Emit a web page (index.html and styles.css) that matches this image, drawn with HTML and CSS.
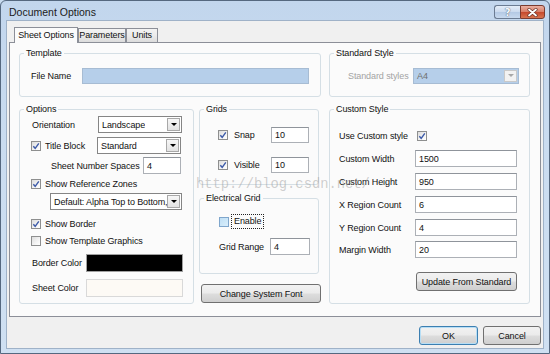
FILE: index.html
```html
<!DOCTYPE html>
<html lang="en">
<head>
    <meta charset="UTF-8">
    <title>Document Options</title>
    <link rel="stylesheet" href="styles.css">
</head>
<body>
    <div class="window">
        <div class="titlebar">
            <span class="title">Document Options</span>
            <div class="caption-btns">
                <span class="cap-btn help">?</span>
                <span class="cap-btn close">
                    <svg width="11" height="9" viewBox="0 0 11 9">
                        <path d="M2 1.5 L9 7.5 M9 1.5 L2 7.5" stroke="#6b3328" stroke-width="3.2" stroke-linecap="round"/>
                        <path d="M2 1.5 L9 7.5 M9 1.5 L2 7.5" stroke="#ffffff" stroke-width="1.8" stroke-linecap="round"/>
                    </svg>
                </span>
            </div>
        </div>

        <div class="client">
            <div class="tabs">
                <span class="tab active">Sheet Options</span>
                <span class="tab tab-params">Parameters</span>
                <span class="tab tab-units">Units</span>
            </div>

            <div class="panel">
                <div class="row top-row">
                    <fieldset class="group template">
                        <legend>Template</legend>
                        <div class="body">
                            <div class="line">
                                <span class="lbl w51">File Name</span>
                                <span class="field blue w227"></span>
                            </div>
                        </div>
                    </fieldset>
                    <fieldset class="group standard">
                        <legend>Standard Style</legend>
                        <div class="body">
                            <div class="line">
                                <span class="lbl w65 disabled">Standard styles</span>
                                <span class="combo blue disabled w106">
                                    <span class="combo-text">A4</span>
                                    <span class="arrow"><i></i></span>
                                </span>
                            </div>
                        </div>
                    </fieldset>
                </div>

                <div class="row main-row">
                    <fieldset class="group options">
                        <legend>Options</legend>
                        <div class="body">
                            <div class="line r-orient">
                                <span class="lbl w66">Orientation</span>
                                <span class="combo w84">
                                    <span class="combo-text">Landscape</span>
                                    <span class="arrow"><i></i></span>
                                </span>
                            </div>
                            <div class="line r-title">
                                <span class="lbl w66 with-cb">
                                    <span class="cb"><svg width="8" height="8" viewBox="0 0 8 8"><path d="M1.3 4.2 L3.2 6.3 L6.8 1.4" stroke="#3c5aa8" stroke-width="1.4" fill="none"/></svg></span>
                                    Title Block
                                </span>
                                <span class="combo w84">
                                    <span class="combo-text">Standard</span>
                                    <span class="arrow"><i></i></span>
                                </span>
                            </div>
                            <div class="line r-spaces">
                                <span class="lbl w92 indent">Sheet Number Spaces</span>
                                <span class="field w38"><span class="val">4</span></span>
                            </div>
                            <div class="line check-line r-zones">
                                <span class="cb"><svg width="8" height="8" viewBox="0 0 8 8"><path d="M1.3 4.2 L3.2 6.3 L6.8 1.4" stroke="#3c5aa8" stroke-width="1.4" fill="none"/></svg></span>
                                <span class="cb-text">Show Reference Zones</span>
                            </div>
                            <div class="line r-zonecombo">
                                <span class="combo w132 indent">
                                    <span class="combo-text">Default: Alpha Top to Bottom,</span>
                                    <span class="arrow"><i></i></span>
                                </span>
                            </div>
                            <div class="line check-line r-border">
                                <span class="cb"><svg width="8" height="8" viewBox="0 0 8 8"><path d="M1.3 4.2 L3.2 6.3 L6.8 1.4" stroke="#3c5aa8" stroke-width="1.4" fill="none"/></svg></span>
                                <span class="cb-text">Show Border</span>
                            </div>
                            <div class="line check-line r-graphics">
                                <span class="cb"></span>
                                <span class="cb-text">Show Template Graphics</span>
                            </div>
                            <div class="line r-color">
                                <span class="lbl w54">Border Color</span>
                                <span class="swatch black"></span>
                            </div>
                            <div class="line r-color">
                                <span class="lbl w54">Sheet Color</span>
                                <span class="swatch cream"></span>
                            </div>
                        </div>
                    </fieldset>

                    <div class="grid-col">
                        <fieldset class="group grids">
                            <legend>Grids</legend>
                            <div class="body">
                                <div class="line r-snap">
                                    <span class="lbl w53 with-cb">
                                        <span class="cb"><svg width="8" height="8" viewBox="0 0 8 8"><path d="M1.3 4.2 L3.2 6.3 L6.8 1.4" stroke="#3c5aa8" stroke-width="1.4" fill="none"/></svg></span>
                                        <span class="gap6">Snap</span>
                                    </span>
                                    <span class="field w38"><span class="val">10</span></span>
                                </div>
                                <div class="line r-visible">
                                    <span class="lbl w53 with-cb">
                                        <span class="cb"><svg width="8" height="8" viewBox="0 0 8 8"><path d="M1.3 4.2 L3.2 6.3 L6.8 1.4" stroke="#3c5aa8" stroke-width="1.4" fill="none"/></svg></span>
                                        <span class="gap6">Visible</span>
                                    </span>
                                    <span class="field w38"><span class="val">10</span></span>
                                </div>
                            </div>
                        </fieldset>
                        <fieldset class="group electrical">
                            <legend>Electrical Grid</legend>
                            <div class="body">
                                <div class="line r-enable">
                                    <span class="cb hover"></span>
                                    <span class="focus-text">Enable</span>
                                </div>
                                <div class="line r-range">
                                    <span class="lbl w51">Grid Range</span>
                                    <span class="field w40"><span class="val">4</span></span>
                                </div>
                            </div>
                        </fieldset>
                        <button class="btn font-btn">Change System Font</button>
                    </div>

                    <fieldset class="group custom">
                        <legend>Custom Style</legend>
                        <div class="body">
                            <div class="line r-use">
                                <span class="lbl w78">Use Custom style</span>
                                <span class="cb"><svg width="8" height="8" viewBox="0 0 8 8"><path d="M1.3 4.2 L3.2 6.3 L6.8 1.4" stroke="#3c5aa8" stroke-width="1.4" fill="none"/></svg></span>
                            </div>
                            <div class="line r-first">
                                <span class="lbl w76">Custom Width</span>
                                <span class="field w102"><span class="val">1500</span></span>
                            </div>
                            <div class="line r-next">
                                <span class="lbl w76">Custom Height</span>
                                <span class="field w102"><span class="val">950</span></span>
                            </div>
                            <div class="line r-next">
                                <span class="lbl w76">X Region Count</span>
                                <span class="field w102"><span class="val">6</span></span>
                            </div>
                            <div class="line r-next">
                                <span class="lbl w76">Y Region Count</span>
                                <span class="field w102"><span class="val">4</span></span>
                            </div>
                            <div class="line r-margin">
                                <span class="lbl w76">Margin Width</span>
                                <span class="field w102"><span class="val">20</span></span>
                            </div>
                            <button class="btn update-btn">Update From Standard</button>
                        </div>
                    </fieldset>
                </div>
            </div>

            <div class="footer">
                <button class="btn default">OK</button>
                <button class="btn">Cancel</button>
            </div>
        </div>

        <div class="watermark">http://blog.csdn.net/</div>
    </div>
</body>
</html>
```

FILE: styles.css
```css
* {
    margin: 0;
    padding: 0;
    box-sizing: border-box;
}

body {
    width: 550px;
    height: 354px;
    overflow: hidden;
    font-family: 'Liberation Sans', Arial, sans-serif;
    font-size: 9px;
    letter-spacing: -0.1px;
    color: #111;
    background: #c8dbef;
}

.window {
    position: relative;
    width: 550px;
    height: 354px;
    display: flex;
    flex-direction: column;
    padding: 0 5px 4px;
    border: 1px solid #55687f;
    border-radius: 6px 6px 0 0;
    background: linear-gradient(180deg, #c2d6ed 0%, #cadcf0 40%, #cfe0f2 100%);
}

/* Title bar */
.titlebar {
    height: 19px;
    display: flex;
    justify-content: space-between;
    padding-left: 3px;
}

.title {
    font-size: 10.5px;
    letter-spacing: 0;
    line-height: 22px;
    color: #1b1b1b;
}

.caption-btns {
    display: flex;
    margin-top: 4px;
    margin-right: -1px;
    height: 14px;
}

.cap-btn {
    display: flex;
    align-items: center;
    justify-content: center;
    height: 14px;
    border: 1px solid #6b7b92;
}

.cap-btn.help {
    width: 26px;
    border-radius: 3px 0 0 3px;
    border-right: none;
    background: linear-gradient(180deg, #e4edf8 0%, #cbdaee 48%, #b4c9e4 52%, #c8d9ee 100%);
    font-family: 'DejaVu Sans', sans-serif;
    font-size: 10px;
    font-weight: bold;
    color: #f6f9fd;
    text-shadow: 0 0 1px #59687c, 0 0 1px #59687c;
}

.cap-btn.close {
    width: 25px;
    border-color: #7a3b2f;
    border-radius: 0 3px 3px 0;
    background: linear-gradient(180deg, #eab0a2 0%, #d97f68 48%, #c5492d 52%, #d8744f 100%);
}

/* Client area */
.client {
    flex: 1;
    display: flex;
    flex-direction: column;
    padding: 0 2px;
    background: #f0f0f0;
    border: 1px solid #9fb2c8;
}

.tabs {
    display: flex;
    align-items: flex-end;
    height: 15px;
    margin-top: 6px;
    padding-left: 5px;
}

.tab {
    height: 14px;
    border: 1px solid #8c8f98;
    border-bottom: none;
    background: linear-gradient(180deg, #f3f3f3 0%, #ebebeb 50%, #dcdcdc 100%);
    text-align: center;
    line-height: 13px;
    white-space: nowrap;
}

.tab.active {
    position: relative;
    z-index: 1;
    width: 64px;
    height: 16px;
    margin-bottom: -1px;
    background: #fbfbfb;
    line-height: 15px;
}

.tab-params {
    width: 48px;
}

.tab-units {
    width: 32px;
}

.panel {
    height: 275px;
    padding: 4px 0 0 9px;
    border: 1px solid #8c8f98;
    background: #fbfbfb;
}

.row {
    display: flex;
}

.top-row {
    gap: 8px;
}

.main-row {
    margin-top: 6px;
    height: 201px;
    gap: 5px;
}

/* Group boxes */
.group {
    border: 1px solid #d5dfe5;
    border-radius: 3px;
    min-width: 0;
}

.group legend {
    margin-left: 4px;
    padding: 0 2px;
    line-height: 12px;
}

.template {
    width: 302px;
}

.template .body {
    padding: 8px 0 12px 11px;
}

.standard {
    width: 201px;
}

.standard .body {
    padding: 8px 0 12px 18px;
}

.options {
    width: 175px;
}

.options .body {
    padding-left: 12px;
}

.grid-col {
    width: 120px;
    display: flex;
    flex-direction: column;
    margin-right: 5px;
}

.grids {
    height: 82px;
}

.grids .body {
    padding-left: 18px;
}

.electrical {
    height: 82px;
    margin-top: 7px;
}

.electrical .body {
    padding-left: 19px;
}

.custom {
    width: 201px;
}

.custom .body {
    padding-left: 9px;
}

/* Rows */
.line {
    display: flex;
    align-items: center;
    height: 17px;
}

.check-line {
    height: 12px;
}

.r-orient { margin-top: 1px; }
.r-title { margin-top: 4px; }
.r-spaces { margin-top: 3px; }
.r-zones { margin-top: 4px; margin-left: -1px; }
.r-zonecombo { margin-top: 3px; }
.r-border { margin-top: 8px; margin-left: -1px; }
.r-graphics { margin-top: 5px; margin-left: -1px; }
.r-color { margin-top: 7px; height: 18px; }

.r-snap { margin-top: 12px; height: 16px; }
.r-visible { margin-top: 14px; height: 16px; }
.r-enable { margin-top: 10px; height: 15px; }
.r-range { margin-top: 9px; }

.r-use { margin-top: 15px; height: 12px; }
.r-first { margin-top: 8px; }
.r-next { margin-top: 6px; }
.r-margin { margin-top: 5px; }

.lbl {
    flex: none;
    white-space: nowrap;
}

.lbl.disabled {
    color: #a3a3a3;
}

.with-cb {
    display: flex;
    align-items: center;
    gap: 4px;
}

.r-title .with-cb {
    margin-left: -1px;
}

.gap6 {
    margin-left: 2px;
}

.indent {
    margin-left: 18px;
}

.r-spaces .indent {
    margin-left: 19px;
}

.w51 { width: 51px; }
.w53 { width: 53px; }
.w54 { width: 54px; }
.w65 { width: 65px; }
.w66 { width: 66px; }
.w76 { width: 76px; }
.w78 { width: 78px; }
.w92 { width: 92px; }

.w38 { width: 38px; }
.w40 { width: 40px; }
.w84 { width: 84px; }
.w102 { width: 102px; }
.w106 { width: 106px; }
.w132 { width: 132px; }
.w227 { width: 227px; }

/* Inputs */
.field {
    display: flex;
    align-items: center;
    height: 100%;
    padding-left: 3px;
    border: 1px solid #acb0b6;
    border-top-color: #8f949b;
    background: #fff;
}

.template .field,
.standard .combo {
    height: 16px;
}

.field.blue,
.combo.blue {
    background: #b6cfea;
    border-color: #a7bcd3;
}

.combo {
    display: flex;
    align-items: center;
    justify-content: space-between;
    height: 100%;
    border: 1px solid #858585;
    background: #fff;
}

.combo-text {
    padding-left: 3px;
    white-space: nowrap;
    overflow: hidden;
}

.combo.disabled .combo-text {
    color: #6f6f6f;
}

.arrow {
    flex: none;
    display: flex;
    align-items: center;
    justify-content: center;
    width: 13px;
    height: 13px;
    margin-right: 1px;
    border: 1px solid #a8a8a8;
    background: linear-gradient(180deg, #f7f7f7, #e2e2e2);
}

.arrow i {
    width: 0;
    height: 0;
    border-left: 3px solid transparent;
    border-right: 3px solid transparent;
    border-top: 3px solid #000;
}

.combo.disabled .arrow {
    height: 12px;
    border-color: #c9c9c9;
    background: #f2f2f2;
}

.combo.disabled .arrow i {
    border-top-color: #a8a8a8;
}

/* Checkboxes */
.cb {
    flex: none;
    display: flex;
    align-items: center;
    justify-content: center;
    width: 10px;
    height: 10px;
    border: 1px solid #8e8f8f;
    background: linear-gradient(135deg, #dcdcdc 0%, #f4f4f4 60%, #ffffff 100%);
}

.cb.hover {
    border-color: #7fa6cc;
    background: linear-gradient(135deg, #bfdff5 0%, #d9eefb 100%);
}

.cb-text {
    margin-left: 4px;
}

.focus-text {
    margin-left: 2px;
    height: 15px;
    line-height: 13px;
    padding: 0 2px;
    border: 1px dotted #222;
}

.swatch {
    width: 97px;
    height: 18px;
    border: 1px solid #a0a0a0;
}

.swatch.black {
    background: #000;
}

.swatch.cream {
    background: #fdfaf5;
    border-color: #d9d9d9;
}

/* Buttons */
.btn {
    height: 19px;
    border: 1px solid #707070;
    border-radius: 3px;
    background: linear-gradient(180deg, #f2f2f2 0%, #ebebeb 48%, #dddddd 52%, #cfcfcf 100%);
    font-family: inherit;
    font-size: 9px;
    letter-spacing: -0.1px;
    white-space: nowrap;
    color: #111;
}

.font-btn {
    width: 120px;
    margin-top: 10px;
    margin-left: 2px;
}

.update-btn {
    width: 101px;
    margin-top: 14px;
    margin-left: 77px;
}

.footer {
    display: flex;
    justify-content: flex-end;
    gap: 5px;
    margin-top: 9px;
}

.footer .btn {
    width: 58px;
}

.btn.default {
    width: 59px;
    border-color: #3c7fb1;
    box-shadow: inset 0 0 0 1px #b7def5;
}

.watermark {
    position: absolute;
    left: 195px;
    top: 176px;
    font-family: 'Liberation Mono', monospace;
    font-size: 13.8px;
    letter-spacing: 0;
    color: rgba(150, 150, 150, 0.45);
    pointer-events: none;
}
```
